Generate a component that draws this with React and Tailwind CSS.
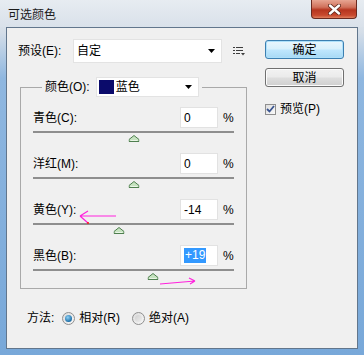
import { Fragment } from 'react'

const FONT = { fontFamily: '"Liberation Sans", "Noto Sans CJK SC", sans-serif' }

const ROWS = [
  { label: '青色(C):', value: '0', pos: 0 },
  { label: '洋红(M):', value: '0', pos: 0 },
  { label: '黄色(Y):', value: '-14', pos: -14 },
  { label: '黑色(B):', value: '+19', pos: 19, selected: true },
]

function Thumb() {
  return (
    <svg width="11" height="7" viewBox="0 0 11 7">
      <path d="M5.5 0.5 L10.5 4.5 L10.5 6.5 L0.5 6.5 L0.5 4.5 Z" fill="#c6e3c0" stroke="#4f7f4f" strokeWidth="1" />
      <path d="M2 5.5 L9 5.5" stroke="#eaf5e7" strokeWidth="1" />
    </svg>
  )
}

function Arrow() {
  return (
    <svg width="7" height="4" viewBox="0 0 7 4">
      <path d="M0 0 L7 0 L3.5 4 Z" fill="#000" />
    </svg>
  )
}

function SliderRow({ label, value, pos, selected }) {
  const left = ((pos + 100) / 200) * 100
  return (
    <div className="h-[34px]">
      <div className="flex items-center h-[21px]">
        <span className="flex-1 text-[12px] text-black">{label}</span>
        <div className="w-[38px] h-[21px] bg-white border border-[#e2e2e2] flex items-center pl-[3px] text-[12px]">
          {selected ? (
            <span className="bg-[#3399ff] text-white px-[1px] leading-[15px]">{value}</span>
          ) : (
            <span className="text-black">{value}</span>
          )}
        </div>
        <span className="ml-[5px] w-[11px] text-[12px] text-black">%</span>
      </div>
      <div className="mt-[3px] h-[2px] bg-[#8e8e8e]" />
      <div className="relative h-[8px]">
        <div className="absolute top-[2px] -translate-x-1/2" style={{ left: `${left}%` }}>
          <Thumb />
        </div>
      </div>
    </div>
  )
}

function Button({ children, primary }) {
  return (
    <div
      className={`w-[79px] h-[19px] rounded-[3px] border flex items-center justify-center text-[12px] text-black ${
        primary
          ? 'border-[#3c7fb1] bg-[linear-gradient(to_bottom,#eaf6fd_0%,#d9f0fc_45%,#bee6fd_55%,#a7d9f5_100%)] shadow-[inset_0_0_0_1px_#aee0fa]'
          : 'border-[#707070] bg-[linear-gradient(to_bottom,#f2f2f2_0%,#ebebeb_45%,#dddddd_55%,#cfcfcf_100%)] shadow-[inset_0_0_0_1px_#fcfcfc]'
      }`}
    >
      {children}
    </div>
  )
}

function Radio({ checked }) {
  return (
    <div className="w-[13px] h-[13px] rounded-full border border-[#8f8f8f] bg-[linear-gradient(135deg,#dcdcdc,#f8f8f8)] flex items-center justify-center">
      {checked ? (
        <div className="w-[7px] h-[7px] rounded-full bg-[radial-gradient(circle_at_40%_35%,#8fd1f5,#1d6fa8_70%,#0e4e7e)]" />
      ) : (
        <div className="w-[7px] h-[7px] rounded-full bg-[linear-gradient(135deg,#d0d0d0,#eeeeee)]" />
      )}
    </div>
  )
}

export default function App() {
  return (
    <div
      className="relative w-[364px] h-[355px] overflow-hidden bg-[linear-gradient(to_bottom,#e4e9ef_0%,#d5dee8_9%,#8fb7e0_22%,#78a8d9_100%)]"
      style={FONT}
    >
      {/* title bar */}
      <div className="flex items-start h-[27px] pl-[8px] pr-[7px] bg-[linear-gradient(to_bottom,#e7ecf1,#d9e1ea)]">
        <span className="mt-[6px] text-[12px] text-[#1b1b1b]">可选颜色</span>
        <div className="flex-1" />
        <div className="w-[46px] h-[19px] rounded-b-[4px] border border-t-0 border-[#6a2a20] bg-[linear-gradient(to_bottom,#e7a592_0%,#d0715b_40%,#b6351f_55%,#c84a2f_85%,#e0805f_100%)] flex items-center justify-center">
          <svg width="13" height="11" viewBox="0 0 13 11">
            <path d="M2 1.5 L11 9.5 M11 1.5 L2 9.5" stroke="#5a2418" strokeWidth="4" strokeLinecap="round" />
            <path d="M2 1.5 L11 9.5 M11 1.5 L2 9.5" stroke="#ffffff" strokeWidth="2.4" strokeLinecap="round" />
          </svg>
        </div>
      </div>

      {/* body */}
      <div className="mx-[6px] h-[322px] border border-[#62768c] bg-[#f0f0f0] flex">
        <div className="w-[258px] pl-[11px] pt-[11px]">
          {/* preset */}
          <div className="flex items-center h-[24px]">
            <span className="w-[55px] text-[12px] text-black">预设(E):</span>
            <div className="w-[149px] h-[24px] bg-white border border-[#e3e3e3] flex items-center pl-[3px] pr-[6px] text-[12px] text-black">
              <span className="flex-1">自定</span>
              <Arrow />
            </div>
            <svg className="ml-[11px]" width="13" height="10" viewBox="0 0 13 10">
              <rect x="0" y="1" width="2" height="1" fill="#3d3d3d" />
              <rect x="3" y="1" width="7" height="1" fill="#3d3d3d" />
              <rect x="0" y="4" width="2" height="1" fill="#3d3d3d" />
              <rect x="3" y="4" width="7" height="1" fill="#3d3d3d" />
              <rect x="0" y="7" width="2" height="1" fill="#3d3d3d" />
              <rect x="3" y="7" width="4" height="1" fill="#3d3d3d" />
              <path d="M8 7 L12 7 L10 9.5 Z" fill="#3d3d3d" />
            </svg>
          </div>

          {/* group box */}
          <fieldset className="ml-[2px] mt-[14px] w-[227px] border border-[#a9a9a9] pl-[12px] pr-[12px] pt-[10px] pb-[9px]">
            <legend className="ml-[9px] px-[3px] flex items-center">
              <span className="text-[12px] text-black">颜色(O):</span>
              <div className="ml-[6px] w-[103px] h-[20px] bg-white border border-[#e3e3e3] flex items-center pl-[2px] pr-[6px]">
                <div className="w-[15px] h-[14px] bg-[#0b0b6b]" />
                <span className="ml-[2px] flex-1 text-[12px] text-black">蓝色</span>
                <Arrow />
              </div>
            </legend>
            <div className="flex flex-col gap-[12px]">
              {ROWS.map((r) => (
                <Fragment key={r.label}>
                  <SliderRow {...r} />
                </Fragment>
              ))}
            </div>
          </fieldset>

          {/* method */}
          <div className="mt-[21px] ml-[9px] flex items-center h-[16px] text-[12px] text-black">
            <span>方法:</span>
            <div className="ml-[8px]">
              <Radio checked />
            </div>
            <span className="ml-[4px]">相对(R)</span>
            <div className="ml-[12px]">
              <Radio />
            </div>
            <span className="ml-[4px]">绝对(A)</span>
          </div>
        </div>

        {/* buttons */}
        <div className="pt-[12px] flex flex-col">
          <Button primary>确定</Button>
          <div className="mt-[9px]">
            <Button>取消</Button>
          </div>
          <div className="mt-[13px] flex items-center">
            <div className="w-[11px] h-[11px] border border-[#8f8f8f] bg-[linear-gradient(135deg,#dedede,#fafafa)] flex items-center justify-center">
              <svg width="9" height="8" viewBox="0 0 9 8">
                <path d="M1 4 L3.5 6.5 L8 1" stroke="#3a5590" strokeWidth="1.8" fill="none" />
              </svg>
            </div>
            <span className="ml-[4px] text-[12px] text-black">预览(P)</span>
          </div>
        </div>
      </div>

      {/* annotation arrows */}
      <svg className="absolute left-0 top-0 pointer-events-none" width="364" height="355">
        <path d="M116 216 L80 216 M80 216 L88 211 M80 216 L88 223" stroke="#ff22dd" strokeWidth="1.2" fill="none" />
        <circle cx="88" cy="223" r="1" fill="#ff1010" />
        <path d="M160 284 L195 281 M195 281 L189 278 M195 281 L190 284" stroke="#ff22dd" strokeWidth="1.2" fill="none" />
      </svg>
    </div>
  )
}
